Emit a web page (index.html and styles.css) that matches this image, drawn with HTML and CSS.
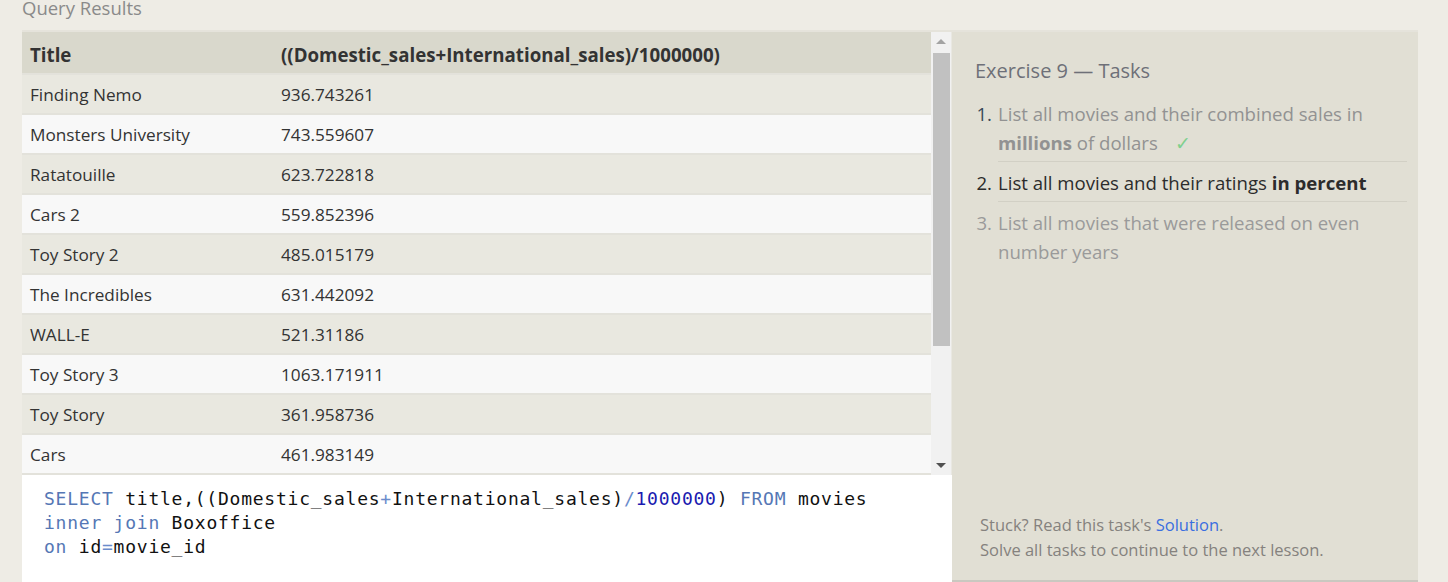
FILE: index.html
```html
<!DOCTYPE html>
<html>
<head>
<meta charset="utf-8">
<link rel="stylesheet" href="styles.css">
</head>
<body>
<div class="title">Query Results</div>
<div class="workspace">
  <div class="left">
    <div class="scroll-area">
      <div class="table">
        <div class="row head"><div class="c1">Title</div><div class="c2">((Domestic_sales+International_sales)/1000000)</div></div>
        <div class="row odd"><div class="c1">Finding Nemo</div><div class="c2">936.743261</div></div>
        <div class="row even"><div class="c1">Monsters University</div><div class="c2">743.559607</div></div>
        <div class="row odd"><div class="c1">Ratatouille</div><div class="c2">623.722818</div></div>
        <div class="row even"><div class="c1">Cars 2</div><div class="c2">559.852396</div></div>
        <div class="row odd"><div class="c1">Toy Story 2</div><div class="c2">485.015179</div></div>
        <div class="row even"><div class="c1">The Incredibles</div><div class="c2">631.442092</div></div>
        <div class="row odd"><div class="c1">WALL-E</div><div class="c2">521.31186</div></div>
        <div class="row even"><div class="c1">Toy Story 3</div><div class="c2">1063.171911</div></div>
        <div class="row odd"><div class="c1">Toy Story</div><div class="c2">361.958736</div></div>
        <div class="row even"><div class="c1">Cars</div><div class="c2">461.983149</div></div>
      </div>
      <div class="scrollbar">
        <div class="arrow up"></div>
        <div class="track"><div class="thumb"></div></div>
        <div class="arrow down"></div>
      </div>
    </div>
    <div class="code"><span class="kw">SELECT</span> title,((Domestic_sales<span class="op">+</span>International_sales)<span class="op">/</span><span class="num">1000000</span>) <span class="kw">FROM</span> movies
<span class="kw">inner</span> <span class="kw">join</span> Boxoffice
<span class="kw">on</span> id<span class="op">=</span>movie_id</div>
  </div>
  <div class="right">
    <div class="tasks">
      <div class="tasks-title">Exercise 9 — Tasks</div>
      <ol class="task-list">
        <li class="task done"><span class="num-label">1.</span><span class="task-text">List all movies and their combined sales in <b>millions</b> of dollars <span class="check">✓</span></span></li>
        <li class="task current"><span class="num-label">2.</span><span class="task-text">List all movies and their ratings <b>in percent</b></span></li>
        <li class="task todo"><span class="num-label">3.</span><span class="task-text">List all movies that were released on even number years</span></li>
      </ol>
    </div>
    <div class="footer">
      <div>Stuck? Read this task's <a class="link">Solution</a>.</div>
      <div>Solve all tasks to continue to the next lesson.</div>
    </div>
  </div>
</div>
</body>
</html>
```
FILE: styles.css
```css
html, body {
  margin: 0;
  padding: 0;
  height: 582px;
  overflow: hidden;
  background: #eeece5;
  font-family: "Open Sans", "Noto Sans", sans-serif;
}
.title {
  height: 30px;
  line-height: 16px;
  font-size: 18.5px;
  color: #8a8a8a;
  padding-left: 22px;
}
.workspace {
  display: flex;
  margin-left: 22px;
  width: 1396px;
  border-top: 2px solid #e5e3db;
}
.left {
  width: 930px;
  display: flex;
  flex-direction: column;
}
.scroll-area {
  display: flex;
  height: 443px;
}
.table {
  width: 910px;
  overflow: hidden;
}
.row {
  display: flex;
  height: 38px;
  align-items: center;
  border-bottom: 2px solid #e3e2db;
  font-size: 17.2px;
  color: #333;
}
.row.head {
  height: 38px;
  padding-top: 3px;
  background: #d9d8cc;
  font-weight: bold;
  font-size: 18.7px;
  color: #333;
}
.row.odd { background: #e9e8e0; }
.row.even { background: #f8f8f8; }
.c1 {
  width: 251px;
  padding-left: 8px;
}
.c2 {
  flex: 1;
}
.scrollbar {
  width: 20px;
  background: #f1f1f1;
  display: flex;
  flex-direction: column;
  align-items: center;
  border-right: 1px solid #e9e8e2;
}
.arrow {
  width: 0;
  height: 0;
  border-left: 5px solid transparent;
  border-right: 5px solid transparent;
  margin: 7px 0;
}
.arrow.up {
  border-bottom: 5px solid #a3a3a3;
}
.arrow.down {
  border-top: 5px solid #505050;
}
.track {
  flex: 1;
  width: 17px;
}
.thumb {
  height: 293px;
  background: #c1c1c1;
  margin-top: 2px;
}
.code {
  flex: 1;
  background: #fff;
  padding: 12px 22px 0;
  font-family: "DejaVu Sans Mono", "Liberation Mono", monospace;
  font-size: 18px;
  letter-spacing: 0.76px;
  line-height: 24px;
  white-space: pre;
  color: #111;
}
.kw { color: #5577b5; }
.op { color: #6a8ccc; }
.num { color: #1a1ab0; }
.right {
  width: 466px;
  background: #e1dfd4;
  border-bottom: 2px solid #c9c8c0;
  display: flex;
  flex-direction: column;
  justify-content: space-between;
  height: 548px;
}
.tasks {
  padding: 25px 11px 0 23px;
}
.tasks-title {
  font-size: 20px;
  color: #6e7078;
  line-height: 28px;
  margin-bottom: 14px;
}
.task-list {
  list-style: none;
  margin: 0;
  padding: 0;
}
.task {
  display: flex;
  font-size: 18.6px;
  line-height: 29px;
}
.num-label {
  width: 17px;
  padding-right: 6px;
  text-align: right;
  flex-shrink: 0;
}
.task-text {
  flex: 1;
  padding-bottom: 4px;
  border-bottom: 1px solid #d2d0c5;
}
.task + .task { margin-top: 6px; }
.task.todo .task-text { border-bottom: none; }
.task.done { color: #929292; }
.task.done .num-label { color: #3a4a5a; }
.task.current { color: #2c2c2c; }
.task.todo { color: #9a9a9a; }
.check {
  color: #7fd08e;
  margin-left: 12px;
}
.footer {
  padding: 0 20px 18px 28px;
  font-size: 16.5px;
  line-height: 25px;
  color: #85827e;
}
.link {
  color: #3a6ee0;
}
```
